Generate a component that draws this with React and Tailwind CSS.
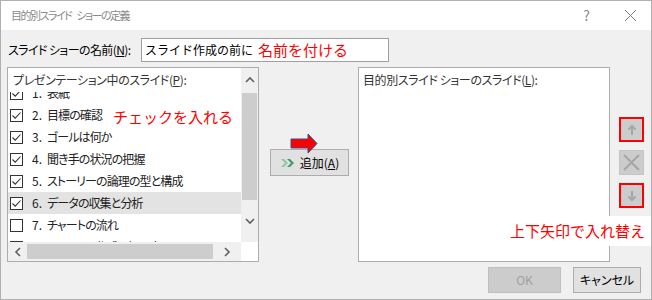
import React from 'react';

const font = { fontFamily: '"Noto Sans CJK JP", "Noto Sans", sans-serif' };

const slides = [
  { n: '1.', t: '表紙', on: true },
  { n: '2.', t: '目標の確認', on: true },
  { n: '3.', t: 'ゴールは何か', on: true },
  { n: '4.', t: '聞き手の状況の把握', on: true },
  { n: '5.', t: 'ストーリーの論理の型と構成', on: true },
  { n: '6.', t: 'データの収集と分析', on: true, sel: true },
  { n: '7.', t: 'チャートの流れ', on: false },
  { n: '8.', t: 'チャートの作成と組み立て', on: false },
];

function Check({ on }) {
  return (
    <span className="w-[13px] h-[13px] border border-[#333] bg-white flex items-center justify-center shrink-0">
      {on && (
        <svg width="11" height="11" viewBox="0 0 11 11">
          <path d="M1.5 5.5 L4.2 8.2 L9.5 2.5" fill="none" stroke="#333" strokeWidth="1.1" />
        </svg>
      )}
    </span>
  );
}

function Chevron({ dir }) {
  const d = {
    up: 'M1 6 L5 2 L9 6',
    down: 'M1 2 L5 6 L9 2',
    left: 'M6 1 L2 5 L6 9',
    right: 'M2 1 L6 5 L2 9',
  }[dir];
  const vertical = dir === 'up' || dir === 'down';
  return (
    <svg width={vertical ? 10 : 8} height={vertical ? 8 : 10} viewBox={vertical ? '0 0 10 8' : '0 0 8 10'}>
      <path d={d} fill="none" stroke="#606060" strokeWidth="1.6" />
    </svg>
  );
}

function SlideList() {
  return (
    <div className="w-[252px] h-[195px] border border-[#adadad] bg-white grid grid-cols-[1fr_17px] grid-rows-[1fr_19px]">
      <div className="relative flex flex-col overflow-hidden">
        <div className="h-[24px] shrink-0 pl-[5px] pt-[3px] text-[12px] tracking-[-0.4px] text-[#333] bg-white relative z-10">
          プレゼンテーション中のスライド(<span className="underline">P</span>):
        </div>
        <div className="flex-1 overflow-hidden">
          <div className="-mt-[10px]">
            {slides.map((s) => (
              <div
                key={s.n}
                className={`h-[22px] flex items-center gap-[9px] pl-[2px] text-[12px] text-[#222] ${s.sel ? 'bg-[#e3e3e3]' : ''}`}
              >
                <Check on={s.on} />
                <span className="flex">
                  <span className="mr-[5px]">{s.n}</span>
                  <span className="tracking-[-0.9px]">{s.t}</span>
                </span>
              </div>
            ))}
          </div>
        </div>
        <div className="absolute left-[105px] top-[38px] text-[15px] text-[#ff0000] z-20 [font-feature-settings:normal]">
          チェックを入れる
        </div>
      </div>
      <div className="bg-[#f0f0f0] flex flex-col items-center">
        <div className="h-[24px] flex items-center justify-center">
          <Chevron dir="up" />
        </div>
        <div className="w-[15px] h-[107px] bg-[#cdcdcd] mt-[1px]" />
        <div className="flex-1 flex items-center justify-center">
          <Chevron dir="down" />
        </div>
      </div>
      <div className="bg-[#f0f0f0] flex items-center">
        <div className="w-[19px] flex justify-center">
          <Chevron dir="left" />
        </div>
        <div className="w-[186px] h-[15px] bg-[#cdcdcd]" />
        <div className="flex-1 flex justify-center">
          <Chevron dir="right" />
        </div>
      </div>
      <div className="bg-white" />
    </div>
  );
}

function SideButton({ children, red }) {
  return (
    <div
      className={`w-[25px] h-[25px] bg-[#cccccc] flex items-center justify-center ${red ? 'border-2 border-[#ff0000]' : 'border border-[#c4c4c4]'}`}
    >
      {children}
    </div>
  );
}

export default function App() {
  return (
    <div
      className="w-[652px] h-[300px] border border-[#b0b0b0] bg-[#f0f0f0] flex flex-col relative overflow-hidden [font-feature-settings:'palt']"
      style={font}
    >
      {/* title bar */}
      <div className="h-[29px] bg-white flex items-center shrink-0">
        <span className="ml-[10px] text-[11px] tracking-[-1.5px] [word-spacing:4px] text-[#8a8a8a]">目的別スライド ショーの定義</span>
        <span className="ml-auto mr-[34px] text-[14px] text-[#8a8a8a]">?</span>
        <svg className="mr-[14px]" width="13" height="13" viewBox="0 0 13 13">
          <path d="M1 1 L12 12 M12 1 L1 12" stroke="#7a7a7a" strokeWidth="1" />
        </svg>
      </div>

      <div className="flex-1 flex flex-col pl-[6px] pt-[8px]">
        {/* name row */}
        <div className="flex items-center h-[24px]">
          <span className="w-[134px] pl-[1px] text-[12px] tracking-[-0.6px] text-black">
            スライド ショーの名前(<span className="underline">N</span>):
          </span>
          <div className="w-[248px] h-[24px] border border-[#a0a0a0] bg-white flex items-center pl-[3px] text-[12px] text-black [font-feature-settings:normal]">
            スライド作成の前に
            <span className="ml-[5px] text-[15px] text-[#ff0000]">名前を付ける</span>
          </div>
        </div>

        {/* lists */}
        <div className="flex mt-[5px]">
          <SlideList />

          <div className="w-[99px] relative flex flex-col items-center pt-[82px]">
            <svg className="absolute left-[31px] top-[66px]" width="28" height="21" viewBox="0 0 28 21">
              <path d="M1 6 L18 6 L18 1 L27 10.5 L18 20 L18 15 L1 15 Z" fill="#ff0000" stroke="#2f528f" strokeWidth="1" />
            </svg>
            <div className="w-[79px] h-[27px] ml-[2px] bg-[#e1e1e1] border border-[#adadad] flex items-center justify-center gap-[4px] text-[12px] text-black">
              <svg width="16" height="10" viewBox="0 0 16 10">
                <path d="M1 1 L4 1 L8 5 L4 9 L1 9 L5 5 Z" fill="#8cc7a8" />
                <path d="M7 1 L10 1 L14 5 L10 9 L7 9 L11 5 Z" fill="#3f9a70" />
              </svg>
              <span>
                追加(<span className="underline">A</span>)
              </span>
            </div>
          </div>

          <div className="w-[252px] h-[195px] border border-[#adadad] bg-white pl-[4px] pt-[3px] text-[12px] tracking-[-0.4px] text-[#333]">
            目的別スライド ショーのスライド(<span className="underline">L</span>):
          </div>

          <div className="flex flex-col pl-[9px] pt-[50px] gap-[8px]">
            <SideButton red>
              <svg width="10" height="12" viewBox="0 0 10 12">
                <path d="M5 11 L5 2 M1.5 5.5 L5 2 L8.5 5.5" fill="none" stroke="#a6a6a6" strokeWidth="2" />
              </svg>
            </SideButton>
            <SideButton>
              <svg width="19" height="19" viewBox="0 0 19 19">
                <path d="M2 2 L17 17 M17 2 L2 17" stroke="#a6a6a6" strokeWidth="2" />
              </svg>
            </SideButton>
            <SideButton red>
              <svg width="10" height="12" viewBox="0 0 10 12">
                <path d="M5 1 L5 10 M1.5 6.5 L5 10 L8.5 6.5" fill="none" stroke="#a6a6a6" strokeWidth="2" />
              </svg>
            </SideButton>
          </div>
        </div>

        {/* bottom buttons */}
        <div className="flex justify-end gap-[12px] mt-[5px] pr-[10px]">
          <div className="w-[73px] h-[26px] bg-[#cccccc] border border-[#bfbfbf] flex items-center justify-center text-[12px] text-[#a0a0a0]">
            OK
          </div>
          <div className="w-[68px] h-[26px] bg-[#e1e1e1] border border-[#adadad] flex items-center justify-center text-[12px] text-black">
            キャンセル
          </div>
        </div>
      </div>

      {/* annotation */}
      <div className="absolute left-[505px] top-[215px] w-[146px] h-[30px] bg-white flex items-center pl-[4px] text-[15px] text-[#ff0000] [font-feature-settings:normal]">
        上下矢印で入れ替え
      </div>
    </div>
  );
}
